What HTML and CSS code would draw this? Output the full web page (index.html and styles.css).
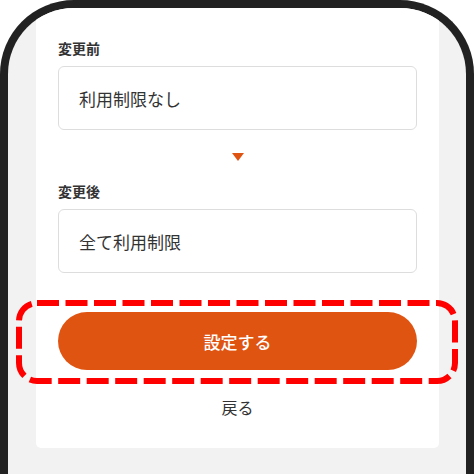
FILE: index.html
```html
<!DOCTYPE html>
<html lang="ja">

<head>
  <meta charset="UTF-8">
  <title>利用制限の変更</title>
  <link rel="stylesheet" href="styles.css">
</head>

<body>
  <div class="phone">
    <div class="card">
      <p class="field__label">変更前</p>
      <div class="field__box">利用制限なし</div>

      <div class="arrow"></div>

      <p class="field__label">変更後</p>
      <div class="field__box">全て利用制限</div>

      <button type="button" class="btn-submit">設定する</button>
      <a class="link-back" href="#">戻る</a>
    </div>

    <!-- 注目枠 -->
    <svg class="highlight" width="442" height="84" viewBox="0 0 442 84">
      <rect x="3" y="3" width="436" height="78" rx="18" fill="none" stroke="#ff0000" stroke-width="6"
        stroke-dasharray="22 6.5" />
    </svg>
  </div>
</body>

</html>
```

FILE: styles.css
```css
* {
  margin: 0;
  padding: 0;
  box-sizing: border-box;
  font-family: "Noto Sans CJK JP", "Noto Sans", sans-serif;
  color: #333;
}

html,
body {
  background-color: #fff;
  overflow: hidden;
  height: 474px;
}

.phone {
  position: relative;
  overflow: hidden;
  height: 474px;
  border: 8px solid #222;
  border-bottom: none;
  border-radius: 74px 74px 0 0;
  background-color: #f2f2f2;
  padding: 0 27px 0 28px;
}

.card {
  background-color: #fff;
  border-radius: 0 0 5px 5px;
  padding: 30px 22px 29px;
  display: flex;
  flex-direction: column;
}

.field__label {
  font-size: 14px;
  font-weight: 700;
  line-height: 20px;
  margin-bottom: 8px;
}

.field__box {
  height: 64px;
  border: 1px solid #ddd;
  border-radius: 6px;
  padding: 0 20px;
  display: flex;
  align-items: center;
  font-size: 17px;
}

.arrow {
  align-self: center;
  width: 0;
  height: 0;
  border-left: 6px solid transparent;
  border-right: 6px solid transparent;
  border-top: 8px solid #e05412;
  margin: 23px 0 20px;
}

.btn-submit {
  margin-top: 39px;
  height: 58px;
  border: none;
  border-radius: 29px;
  background-color: #e05412;
  color: #fff;
  font-size: 17px;
  font-weight: 500;
  cursor: pointer;
}

.link-back {
  margin-top: 25px;
  align-self: center;
  font-size: 16px;
  line-height: 24px;
  text-decoration: none;
}

.highlight {
  position: absolute;
  left: 8px;
  top: 292px;
}
```
